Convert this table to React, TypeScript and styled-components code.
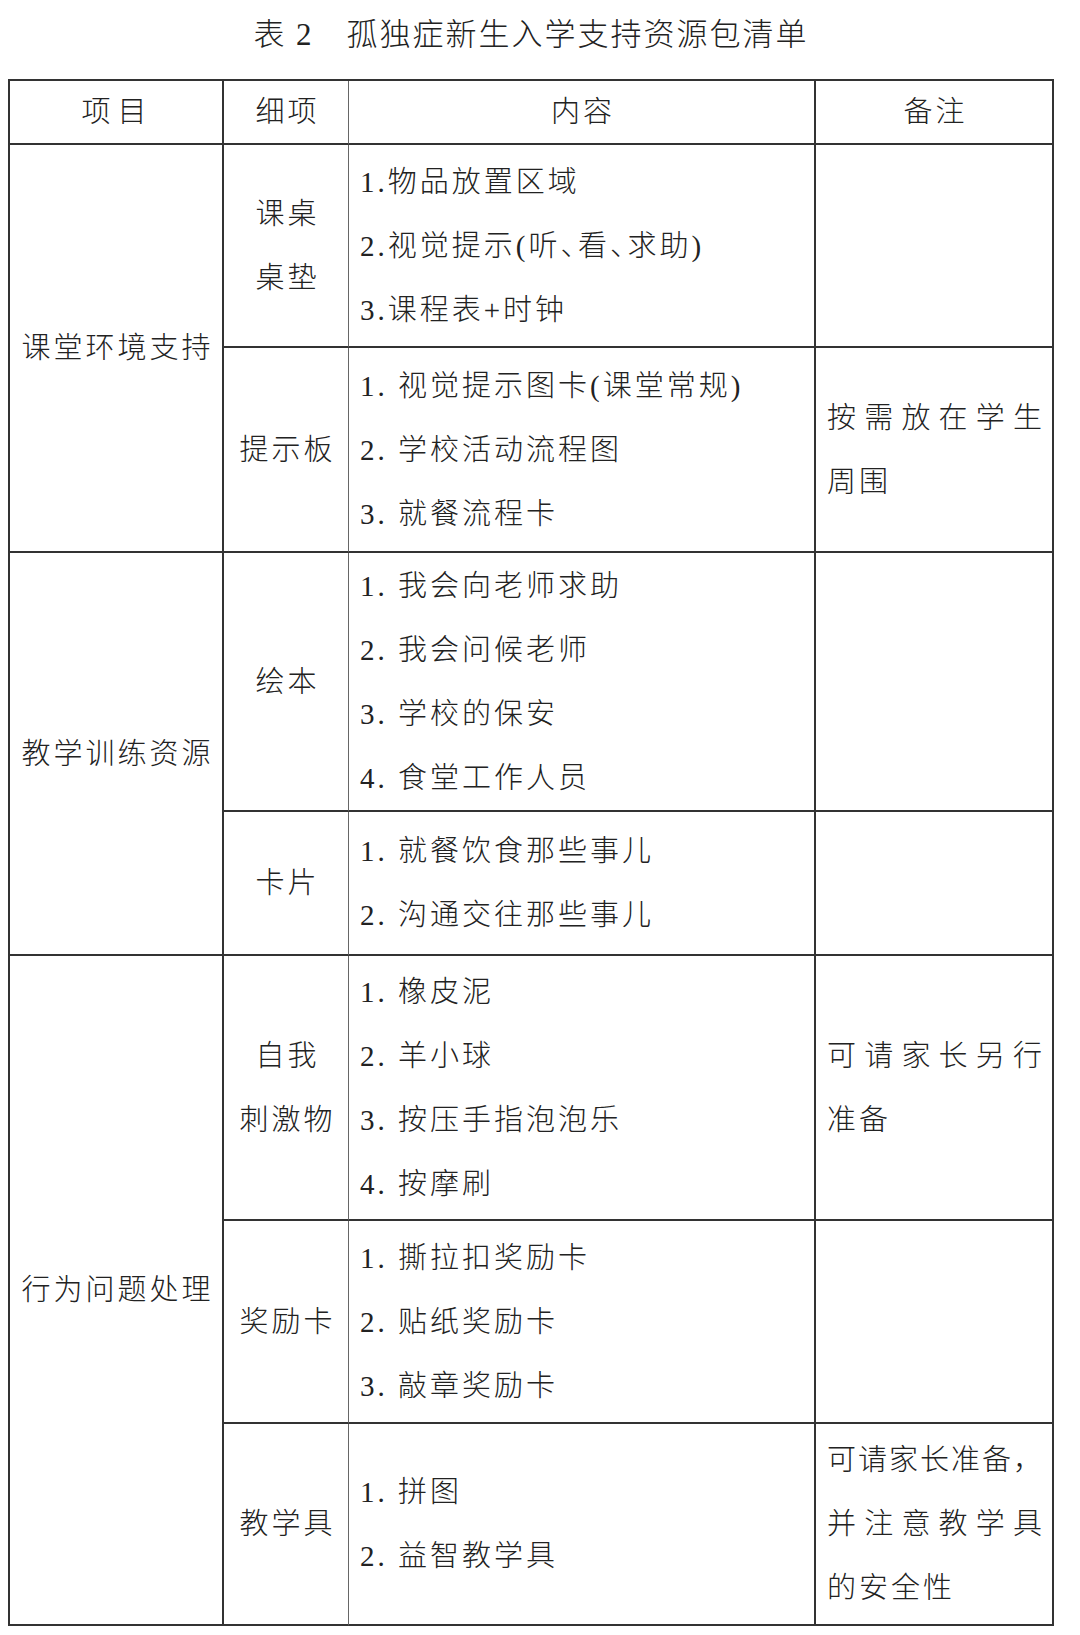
import React from "react";
import styled, { createGlobalStyle } from "styled-components";

const Global = createGlobalStyle`
  html, body { margin: 0; padding: 0; background: #fff; }
  body {
    font-family: "Liberation Serif", "Noto Sans CJK SC", serif;
    color: #222;
  }
`;

type Item = {
  detail: string[];
  content: string[];
  note?: string[];
  h: number;
};
type Section = { name: string; items: Item[] };

const sections: Section[] = [
  {
    name: "课堂环境支持",
    items: [
      {
        detail: ["课桌", "桌垫"],
        content: ["1.物品放置区域", "2.视觉提示(听、看、求助)", "3.课程表+时钟"],
        h: 203,
      },
      {
        detail: ["提示板"],
        content: ["1. 视觉提示图卡(课堂常规)", "2. 学校活动流程图", "3. 就餐流程卡"],
        note: ["按需放在学生", "周围"],
        h: 205,
      },
    ],
  },
  {
    name: "教学训练资源",
    items: [
      {
        detail: ["绘本"],
        content: ["1. 我会向老师求助", "2. 我会问候老师", "3. 学校的保安", "4. 食堂工作人员"],
        h: 259,
      },
      {
        detail: ["卡片"],
        content: ["1. 就餐饮食那些事儿", "2. 沟通交往那些事儿"],
        h: 144,
      },
    ],
  },
  {
    name: "行为问题处理",
    items: [
      {
        detail: ["自我", "刺激物"],
        content: ["1. 橡皮泥", "2. 羊小球", "3. 按压手指泡泡乐", "4. 按摩刷"],
        note: ["可请家长另行", "准备"],
        h: 265,
      },
      {
        detail: ["奖励卡"],
        content: ["1. 撕拉扣奖励卡", "2. 贴纸奖励卡", "3. 敲章奖励卡"],
        h: 203,
      },
      {
        detail: ["教学具"],
        content: ["1. 拼图", "2. 益智教学具"],
        note: ["可请家长准备，", "并注意教学具", "的安全性"],
        h: 202,
      },
    ],
  },
];

const Page = styled.div`
  width: 1080px;
  height: 1635px;
  box-sizing: border-box;
  padding: 15px 0 0 8px;
  background: #fff;
`;

const Title = styled.h1`
  margin: 0;
  width: 1046px;
  height: 40px;
  line-height: 40px;
  text-align: center;
  font-size: 31px;
  font-weight: 300;
  letter-spacing: 2px;
  color: #222;
`;

const Grid = styled.div<{ $rows: string }>`
  margin-top: 24px;
  display: grid;
  box-sizing: border-box;
  width: 1046px;
  grid-template-columns: 214px 125px 467px 238px;
  grid-template-rows: ${(p) => p.$rows};
  border-top: 2px solid #333;
  border-left: 2px solid #333;
`;

const Cell = styled.div<{ $span?: number; $align?: "center" | "left"; $thin?: boolean }>`
  grid-row: span ${(p) => p.$span ?? 1};
  display: flex;
  flex-direction: column;
  justify-content: center;
  align-items: ${(p) => (p.$align === "left" ? "stretch" : "center")};
  padding: ${(p) => (p.$align === "left" ? "0 10px 0 11px" : "0 0 0 3px")};
  border-right: ${(p) => (p.$thin ? "1px solid #666" : "2px solid #333")};
  border-bottom: 2px solid #333;
  min-width: 0;
  overflow: hidden;
`;

const Line = styled.div<{ $wide?: boolean }>`
  font-size: 29px;
  line-height: 64px;
  letter-spacing: ${(p) => (p.$wide ? "7px" : "3px")};
  white-space: nowrap;
  font-weight: 300;
  font-feature-settings: "halt";
`;

const NoteLine = styled.div<{ $full?: boolean }>`
  font-size: 29px;
  line-height: 64px;
  font-weight: 300;
  white-space: nowrap;
  letter-spacing: ${(p) => (p.$full ? "0" : "3px")};
  text-align: ${(p) => (p.$full ? "justify" : "left")};
  text-align-last: ${(p) => (p.$full ? "justify" : "left")};
  text-justify: inter-character;
`;

const headers = ["项目", "细项", "内容", "备注"];

export default function App() {
  const rows = [64, ...sections.flatMap((s) => s.items.map((i) => i.h))]
    .map((h) => `${h}px`)
    .join(" ");

  return (
    <>
      <Global />
      <Page>
        <Title>表 2　孤独症新生入学支持资源包清单</Title>
        <Grid $rows={rows}>
          {headers.map((h, i) => (
            <Cell key={h} $thin={i === 1}>
              <Line $wide={i === 0}>{h}</Line>
            </Cell>
          ))}
          {sections.map((s) =>
            s.items.map((it, idx) => (
              <React.Fragment key={s.name + idx}>
                {idx === 0 && (
                  <Cell $span={s.items.length}>
                    <Line>{s.name}</Line>
                  </Cell>
                )}
                <Cell $thin>
                  {it.detail.map((d) => (
                    <Line key={d}>{d}</Line>
                  ))}
                </Cell>
                <Cell $align="left">
                  {it.content.map((c) => (
                    <Line key={c}>{c}</Line>
                  ))}
                </Cell>
                <Cell $align="left">
                  {(it.note ?? []).map((n, ni, arr) => (
                    <NoteLine key={n} $full={ni < arr.length - 1}>
                      {n}
                    </NoteLine>
                  ))}
                </Cell>
              </React.Fragment>
            ))
          )}
        </Grid>
      </Page>
    </>
  );
}
